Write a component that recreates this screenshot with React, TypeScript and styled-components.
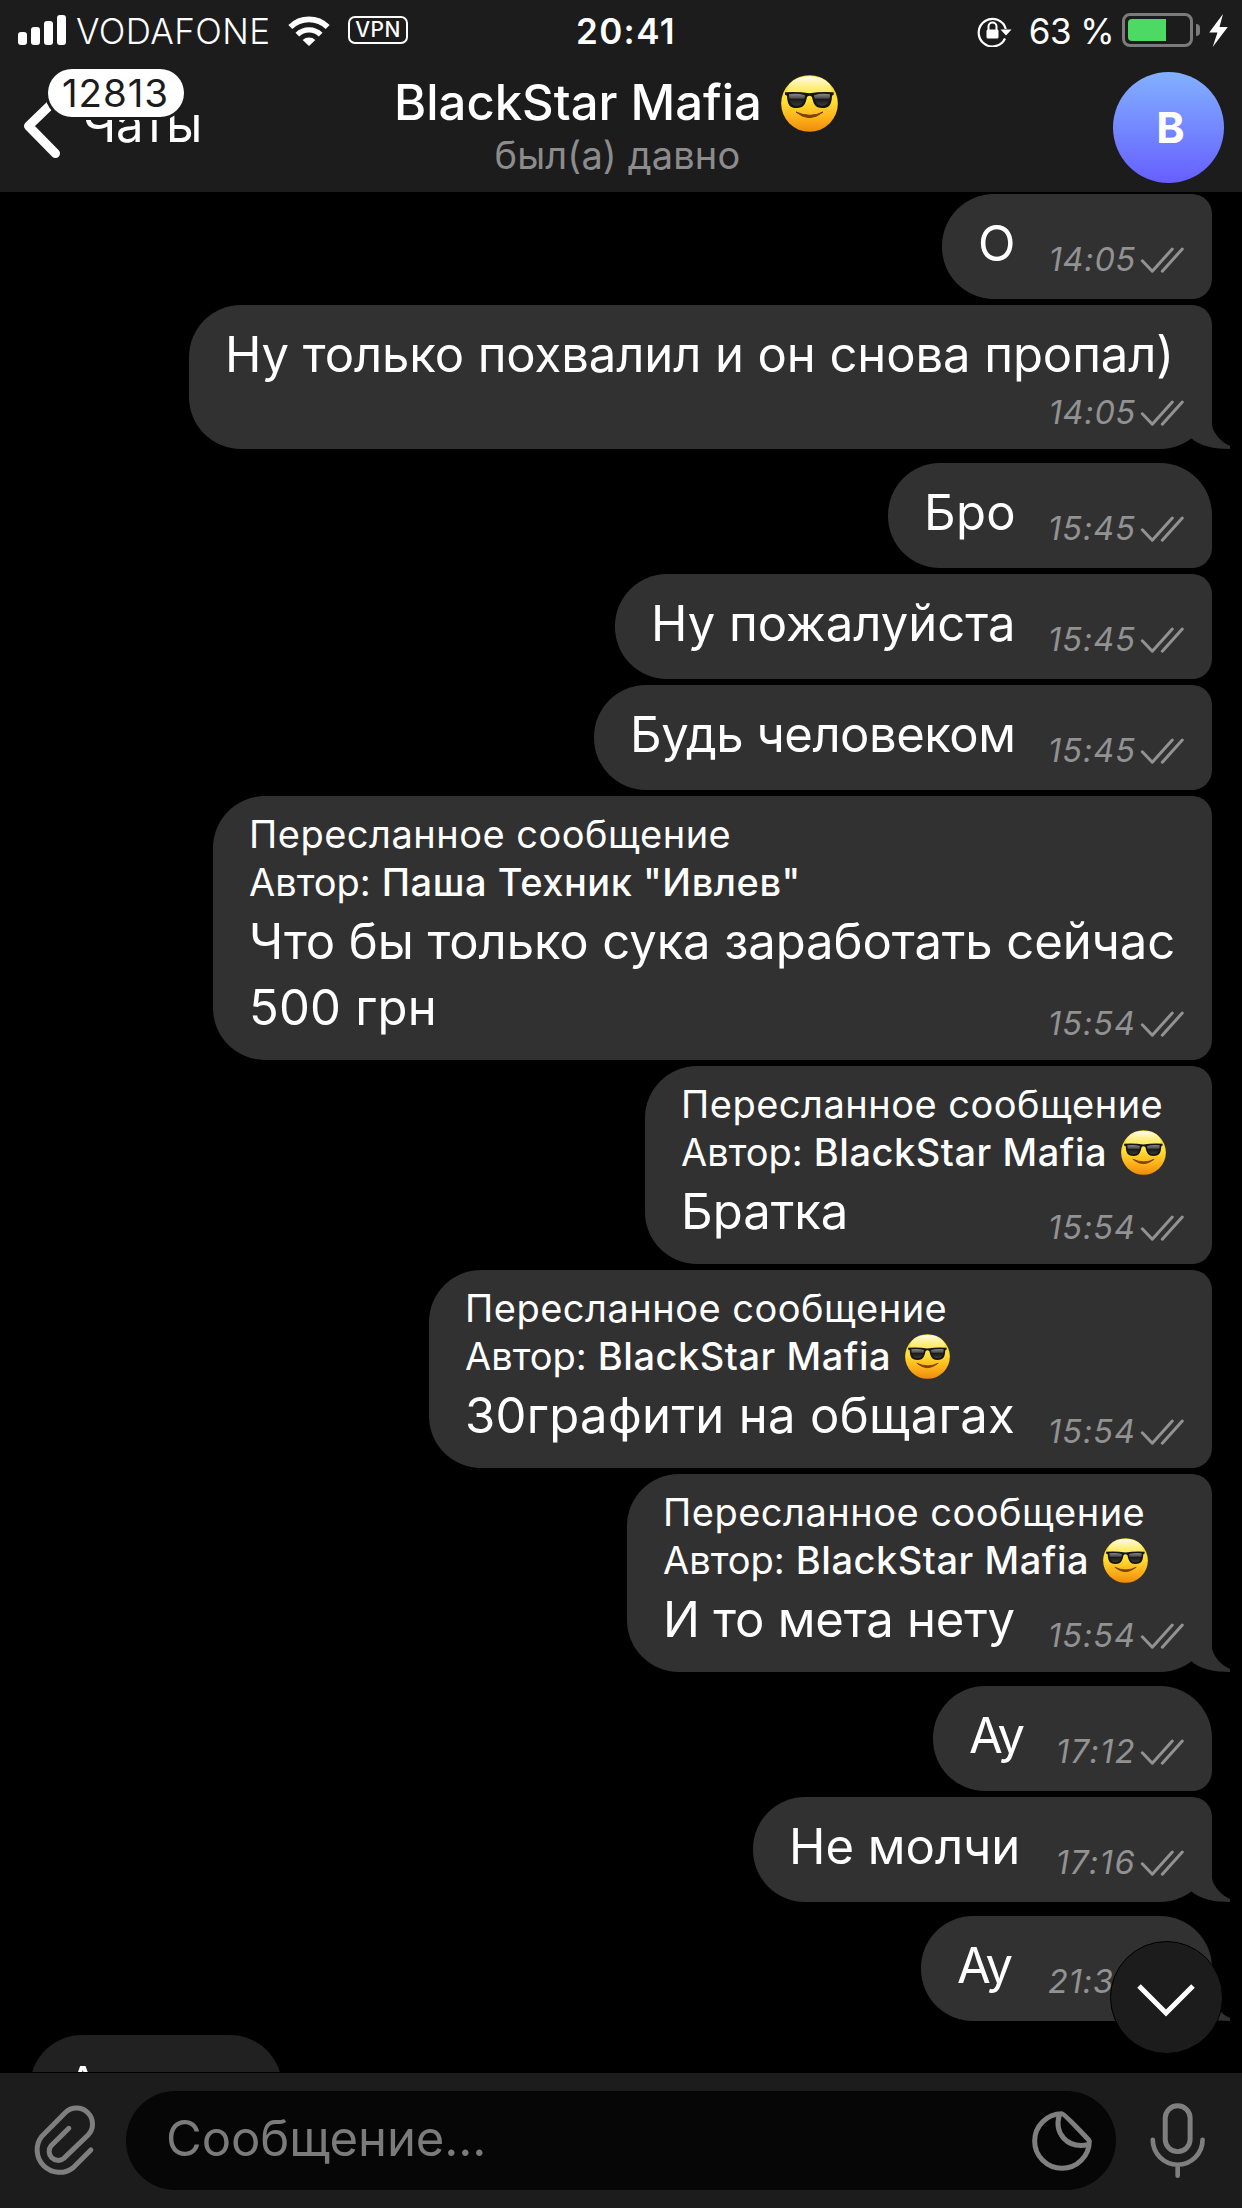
import React from 'react'
import styled, { createGlobalStyle, css } from 'styled-components'

const colors = {
  bar: '#1c1c1c',
  bubble: '#313131',
  incoming: '#212121',
  muted: '#8c8c8c',
  icon: '#7f7f7f',
}

const GlobalStyle = createGlobalStyle`
  * {
    box-sizing: border-box;
  }
  body {
    margin: 0;
    background: #000;
    color: #fff;
    font-family: Inter, 'Noto Sans', sans-serif;
  }
  svg {
    display: block;
    flex: none;
  }
`

const Screen = styled.div`
  position: relative;
  display: flex;
  flex-direction: column;
  width: 1242px;
  height: 2208px;
  overflow: hidden;
  background: #000;
`

/* ---------- header ---------- */

const Header = styled.header`
  flex: none;
  height: 192px;
  background: ${colors.bar};
`

const StatusBar = styled.div`
  display: grid;
  grid-template-columns: 576px 1fr auto;
  align-items: center;
  height: 62px;
  padding: 0 14px 1px 0;
  font-size: 35px;
  line-height: 42px;
  white-space: nowrap;
`

const StatusGroup = styled.div`
  display: flex;
  align-items: center;
`

const Signal = styled.div`
  display: flex;
  align-items: flex-end;
  gap: 4px;
  height: 30px;
  margin: 0 10px 1px 18px;
`

const SignalBar = styled.span<{ $height: number }>`
  width: 9px;
  height: ${({ $height }) => $height}px;
  border-radius: 3px;
  background: #fff;
`

const Carrier = styled.span`
  width: 212px;
  font-weight: 350;
  letter-spacing: 0.4px;
`

const Clock = styled.span`
  font-weight: 600;
  letter-spacing: 1.36px;
`

const Vpn = styled.span`
  width: 60px;
  height: 28px;
  margin: 0 0 1px 18px;
  border: 2px solid #fff;
  border-radius: 7px;
  font-size: 21px;
  font-weight: 500;
  line-height: 24px;
  letter-spacing: 0.47px;
  text-align: center;
`

const Percent = styled.span`
  margin: 0 8px 0 17px;
  letter-spacing: -0.6px;
`

const Battery = styled.div`
  width: 71px;
  height: 34px;
  margin-bottom: 1px;
  padding: 3px;
  border: 3px solid #7b7b7b;
  border-radius: 8px;
`

const BatteryLevel = styled.div`
  width: 38px;
  height: 22px;
  border-radius: 4px 0 0 4px;
  background: #4cd964;
`

const BatteryNub = styled.div`
  width: 4px;
  height: 12px;
  margin: 0 9px 1px 3px;
  border-radius: 0 5px 5px 0;
  background: #7b7b7b;
`

const NavBar = styled.div`
  display: grid;
  grid-template-columns: 235px 1fr 245px;
  height: 130px;
`

const Back = styled.div`
  position: relative;
  display: flex;
  align-items: flex-start;
  padding: 29px 0 0 20px;
`

const BackLabel = styled.span`
  margin-left: 18px;
  font-size: 49px;
  line-height: 68px;
  letter-spacing: -0.4px;
`

const UnreadBadge = styled.span`
  position: absolute;
  top: 7px;
  left: 48px;
  width: 136px;
  height: 48px;
  padding-left: 14px;
  border-radius: 24px;
  background: #fff;
  box-shadow: 0 0 0 3px ${colors.bar};
  color: ${colors.bar};
  font-size: 38.5px;
  line-height: 48px;
  letter-spacing: 0.92px;
`

const Peer = styled.div`
  display: flex;
  flex-direction: column;
  align-items: center;
  padding-top: 11px;
`

const PeerName = styled.div`
  display: flex;
  align-items: center;
  gap: 19px;
  font-size: 49px;
  font-weight: 500;
  line-height: 60px;
`

const PeerStatus = styled.div`
  padding-left: 3px;
  color: ${colors.muted};
  font-size: 38px;
  line-height: 44px;
  letter-spacing: 0.15px;
`

const Avatar = styled.div`
  justify-self: end;
  width: 111px;
  height: 111px;
  margin: 10px 18px 0 0;
  padding: 0 0 0 4px;
  border-radius: 50%;
  background: linear-gradient(#82b1ff, #665fff);
  font-size: 43px;
  font-weight: 700;
  line-height: 111px;
  text-align: center;
`

/* ---------- messages ---------- */

const List = styled.main`
  display: flex;
  flex: 1;
  flex-direction: column;
  align-items: flex-end;
  min-height: 0;
  padding: 2px 30px 0;
  overflow: hidden;
`

type Corner = 'big' | 'small'

const radius = { big: '52px', small: '20px' }

const Bubble = styled.div<{ $width: number; $top: Corner; $last: boolean; $plain: boolean }>`
  position: relative;
  flex: none;
  width: ${({ $width }) => $width}px;
  margin-bottom: ${({ $last }) => ($last ? 14 : 6)}px;
  padding: ${({ $plain }) => ($plain ? '17px 28px 22px 36px' : '14px 28px 19px 36px')};
  border-radius: 52px;
  border-top-right-radius: ${({ $top }) => radius[$top]};
  border-bottom-right-radius: ${({ $last }) => radius[$last ? 'big' : 'small']};
  background: ${colors.bubble};
`

const IncomingBubble = styled(Bubble)`
  align-self: flex-start;
  background: ${colors.incoming};
`

const Body = styled.div<{ $stacked?: boolean }>`
  display: flex;
  align-items: flex-end;
  justify-content: space-between;
  ${({ $stacked }) =>
    $stacked &&
    css`
      flex-direction: column;
      align-items: stretch;
      gap: 8px;
      padding-top: 3px;
    `}
`

const Text = styled.p<{ $tracking?: number }>`
  margin: 0;
  font-size: 49px;
  line-height: 66px;
  letter-spacing: ${({ $tracking = 0 }) => $tracking}px;
  white-space: pre;
`

const Meta = styled.div`
  display: flex;
  flex: none;
  align-items: flex-end;
  align-self: flex-end;
  height: 34px;
  color: #929292;
`

const Time = styled.time<{ $tracking: number }>`
  margin-right: 4px;
  font-size: 32.5px;
  font-style: italic;
  line-height: 34px;
  letter-spacing: ${({ $tracking }) => $tracking}px;
`

const Checks = styled.svg`
  width: 44px;
  height: 26px;
  margin-bottom: 4px;
`

const Forward = styled.div`
  margin-bottom: 3px;
  font-size: 38px;
  line-height: 48px;
  letter-spacing: 0.5px;
  white-space: nowrap;
`

const ForwardAuthor = styled.div`
  display: flex;
  align-items: center;
  height: 48px;
`

const AuthorLabel = styled.span`
  margin-right: 11px;
  letter-spacing: 0;
`

const AuthorName = styled.span`
  margin-right: 14px;
  font-weight: 500;
  letter-spacing: 0.54px;
`

const BubbleTail = styled.svg`
  position: absolute;
  right: -18px;
  bottom: 0;
  width: 39px;
  height: 52px;
`

const ScrollButton = styled.button`
  position: absolute;
  top: 1941px;
  left: 1110px;
  display: flex;
  align-items: center;
  justify-content: center;
  width: 113px;
  height: 113px;
  padding: 4px 2px 0 0;
  border: 1px solid #000;
  border-radius: 50%;
  background: ${colors.bar};
`

/* ---------- composer ---------- */

const Composer = styled.footer`
  display: flex;
  flex: none;
  align-items: center;
  height: 136px;
  padding-left: 30px;
  border-top: 1px solid #000;
  background: ${colors.bar};
`

const Field = styled.div`
  display: flex;
  align-items: center;
  justify-content: space-between;
  width: 990px;
  height: 99px;
  margin: 0 32px 0 29px;
  padding: 0 24px 0 40px;
  border-radius: 50px;
  background: #060606;
`

const Placeholder = styled.span`
  padding-bottom: 3px;
  color: #7b7b7b;
  font-size: 49px;
  line-height: 60px;
  letter-spacing: -0.1px;
`

const SunglassesEmoji: React.FC<{ size: number }> = ({ size }) => (
  <svg width={size} height={size} viewBox="0 0 171 171" role="img" aria-label="😎">
    <defs>
      <linearGradient id="face" x1="0" y1="0" x2="0" y2="1">
        <stop offset="0" stopColor="#fdd52c" />
        <stop offset="0.45" stopColor="#ffe135" />
        <stop offset="0.72" stopColor="#ffb61c" />
        <stop offset="1" stopColor="#ee8b0c" />
      </linearGradient>
      <linearGradient id="shine" x1="0" y1="0" x2="0" y2="1">
        <stop offset="0" stopColor="#fffef2" />
        <stop offset="1" stopColor="#fff04a" stopOpacity="0.1" />
      </linearGradient>
      <linearGradient id="lens" x1="0" y1="0" x2="0" y2="1">
        <stop offset="0" stopColor="#8a8a8a" />
        <stop offset="0.38" stopColor="#4a4a4a" />
        <stop offset="0.42" stopColor="#161616" />
        <stop offset="1" stopColor="#3a3a3a" />
      </linearGradient>
    </defs>
    <circle cx="85.500" cy="85.500" r="85" fill="url(#face)" />
    <ellipse cx="85.500" cy="45" rx="66" ry="41" fill="url(#shine)" />
    <path d="M12 52 Q50 49 85 55 Q121 49 158 52 L158 59 L153 62 C152 90 144 99 123 99 C104 99 97 88 93 66 Q85 58 78 66 C74 88 67 99 48 99 C27 99 19 90 18 62 L12 59Z" fill="#151515" />
    <path d="M24 58 Q48 54 72 61 C70 82 63 92 48 92 C32 92 25 84 24 58Z" fill="url(#lens)" />
    <path d="M99 61 Q123 54 147 58 C146 84 139 92 123 92 C108 92 101 82 99 61Z" fill="url(#lens)" />
    <path d="M45 111 Q85 145 126 111 Q88 131 45 111Z" fill="#7a4208" stroke="#7a4208" strokeWidth="3" strokeLinejoin="round" />
  </svg>
)

interface Message {
  text: string
  time: string
  width: number
  tracking?: number
  timeTracking?: number
  author?: string
  emoji?: boolean
  stacked?: boolean
  first?: boolean
  last?: boolean
}

const messages: Message[] = [
  { text: 'О', time: '14:05', width: 270, timeTracking: 0.7 },
  { text: 'Ну только похвалил и он снова пропал)', time: '14:05', width: 1023, tracking: -0.09, timeTracking: 0.7, stacked: true, last: true },
  { text: 'Бро', time: '15:45', width: 324, tracking: 0.3, first: true },
  { text: 'Ну пожалуйста', time: '15:45', width: 597, tracking: 0 },
  { text: 'Будь человеком', time: '15:45', width: 618, tracking: -0.48 },
  { text: 'Что бы только сука заработать сейчас\n500 грн', time: '15:54', width: 999, tracking: -0.1, author: 'Паша Техник "Ивлев"' },
  { text: 'Братка', time: '15:54', width: 567, author: 'BlackStar Mafia', emoji: true },
  { text: '30графити на общагах', time: '15:54', width: 783, tracking: 0.33, author: 'BlackStar Mafia', emoji: true },
  { text: 'И то мета нету', time: '15:54', width: 585, tracking: -0.22, author: 'BlackStar Mafia', emoji: true, last: true },
  { text: 'Ау', time: '17:12', width: 279, tracking: -2, timeTracking: 1.4, first: true },
  { text: 'Не молчи', time: '17:16', width: 459, timeTracking: 1.4, last: true },
  { text: 'Ау', time: '21:34', width: 291, tracking: -2, timeTracking: 0.9, first: true, last: true },
]

const MessageMeta: React.FC<{ time: string; tracking: number }> = ({ time, tracking }) => (
  <Meta>
    <Time $tracking={tracking}>{time}</Time>
    <Checks viewBox="0 0 44 26" fill="none" stroke="currentColor" strokeWidth="3" strokeLinecap="round" strokeLinejoin="round">
      <path d="M2.300 13.800L12.300 24.200L32.300 2M22.300 24.200L42.300 2" />
    </Checks>
  </Meta>
)

const MessageBubble: React.FC<{ message: Message }> = ({ message }) => {
  const { text, time, width, tracking, timeTracking = 1, author, emoji, stacked, first, last } = message
  const lines = text.split('\n')
  return (
    <Bubble $width={width} $top={first ? 'big' : 'small'} $last={!!last} $plain={!author && !stacked}>
      {author && (
        <Forward>
          Пересланное сообщение
          <ForwardAuthor>
            <AuthorLabel>Автор:</AuthorLabel>
            <AuthorName>{author}</AuthorName>
            {emoji && <SunglassesEmoji size={45} />}
          </ForwardAuthor>
        </Forward>
      )}
      {/* the time shares the row of the last line */}
      {lines.map((line, i) => (
        <Body key={line} $stacked={stacked}>
          <Text $tracking={i === 0 ? tracking : 0.2}>{line}</Text>
          {i === lines.length - 1 && <MessageMeta time={time} tracking={timeTracking} />}
        </Body>
      ))}
      {last && (
        <BubbleTail viewBox="31 0 39 52">
          <path d="M31 0H52V28C53 36 61 45 70 49V52C55 52 39 49 31 41Z" fill={colors.bubble} />
        </BubbleTail>
      )}
    </Bubble>
  )
}

const App: React.FC = () => {
  return (
    <>
      <GlobalStyle />
      <Screen>
        <Header>
          <StatusBar>
            <StatusGroup>
              <Signal>
                {[13, 18, 24, 30].map((h) => (
                  <SignalBar key={h} $height={h} />
                ))}
              </Signal>
              <Carrier>VODAFONE</Carrier>
              <svg width="42" height="30" viewBox="0 0 126 90">
                <path d="M7 33A80 80 0 0 1 119 33" fill="none" stroke="#fff" strokeWidth="17" />
                <path d="M28 56A50 50 0 0 1 98 56" fill="none" stroke="#fff" strokeWidth="16" />
                <path d="M63 90L44 72A28 28 0 0 1 82 72Z" fill="#fff" />
              </svg>
              <Vpn>VPN</Vpn>
            </StatusGroup>
            <Clock>20:41</Clock>
            <StatusGroup>
              <svg width="35" height="32" viewBox="0 0 35 32">
                <path d="M28 23.500A13.800 13.800 0 1 1 28.800 14" fill="none" stroke="#fff" strokeWidth="2.200" />
                <path d="M23.500 14.500H34.500L29 20.500Z" fill="#fff" />
                <rect x="9.500" y="14.500" width="12" height="9" rx="1.500" fill="#fff" />
                <path d="M11.500 15V11.500a4 4 0 0 1 8 0V15" fill="none" stroke="#fff" strokeWidth="2" />
              </svg>
              <Percent>63 %</Percent>
              <Battery>
                <BatteryLevel />
              </Battery>
              <BatteryNub />
              <svg width="19" height="33" viewBox="0 0 54 96">
                <path d="M40 0L0 54H24L10 96L54 38H30Z" fill="#fff" />
              </svg>
            </StatusGroup>
          </StatusBar>
          <NavBar>
            <Back>
              <svg width="44" height="70" viewBox="0 0 44 70" fill="none" stroke="#fff" strokeWidth="9" strokeLinecap="round" strokeLinejoin="round">
                <path d="M35.500 9L8.500 35L35.500 62.500" />
              </svg>
              <BackLabel>Чаты</BackLabel>
              <UnreadBadge>12813</UnreadBadge>
            </Back>
            <Peer>
              <PeerName>
                BlackStar Mafia
                <SunglassesEmoji size={57} />
              </PeerName>
              <PeerStatus>был(а) давно</PeerStatus>
            </Peer>
            <Avatar>B</Avatar>
          </NavBar>
        </Header>

        <List>
          {messages.map((message, i) => (
            <MessageBubble key={i} message={message} />
          ))}
          <IncomingBubble $width={252} $top="big" $last $plain>
            <Text>Ау</Text>
          </IncomingBubble>
        </List>

        <Composer>
          <svg width="67" height="75" viewBox="90 275 200 225" fill="none" stroke={colors.icon} strokeWidth="15" strokeLinecap="round">
            <path d="M272 416L219 469A67 67 0 0 1 125 375L195 304A48 48 0 0 1 263 372L191 441A27 27 0 0 1 153 403L206 351" />
          </svg>
          <Field>
            <Placeholder>Сообщение...</Placeholder>
            <svg width="60" height="60" viewBox="396 630 180 180" fill="none" stroke={colors.icon} strokeWidth="15" strokeLinejoin="round">
              <path d="M568 720A82 82 0 1 1 486 638Q492 638 560 710Q568 718 568 720Z" />
              <path d="M478 642C462 696 500 744 565 731" />
            </svg>
          </Field>
          <svg width="60" height="79" viewBox="745 602 180 238" fill="none" stroke={colors.icon} strokeLinecap="round">
            <rect x="796.500" y="616.500" width="75" height="138" rx="37" strokeWidth="15" />
            <path d="M759 719A75 75 0 0 0 909 719M834 796V827" strokeWidth="14" />
          </svg>
        </Composer>

        <ScrollButton aria-label="Вниз">
          <svg width="60" height="36" viewBox="0 0 60 36" fill="none" stroke="#fff" strokeWidth="5">
            <path d="M3 4L30 31L57 4" />
          </svg>
        </ScrollButton>
      </Screen>
    </>
  )
}

export default App
